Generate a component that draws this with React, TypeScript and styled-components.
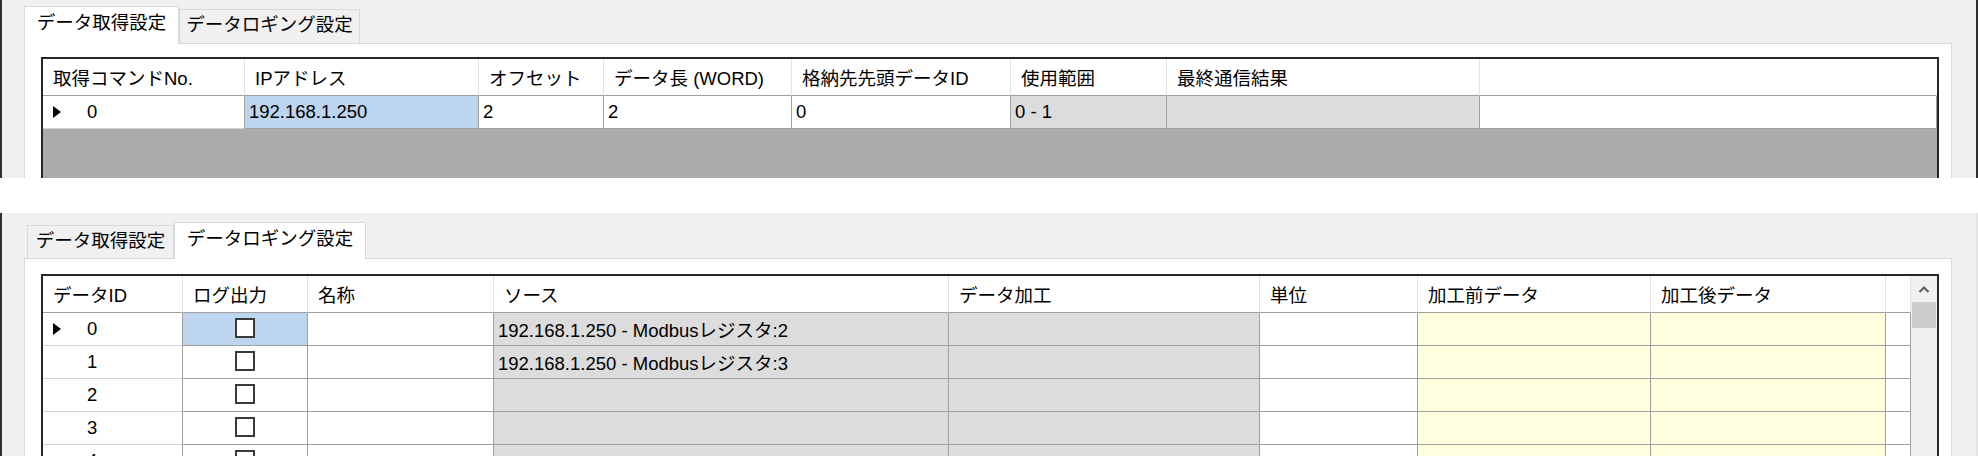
import React from "react";
import styled, { createGlobalStyle } from "styled-components";

const GlobalStyle = createGlobalStyle`
  html, body { margin: 0; padding: 0; background: #ffffff; }
  body {
    font-family: "Liberation Sans", "Noto Sans CJK JP", sans-serif;
    color: #000;
  }
`;

type Kind = "white" | "sel" | "ro" | "yellow";
const fills: Record<Kind, string> = {
  white: "#ffffff",
  sel: "#bdd5ee",
  ro: "#dcdcdc",
  yellow: "#ffffe0",
};

const Page = styled.div`
  width: 1978px;
  display: flex;
  flex-direction: column;
  gap: 35px;
`;

const Shot = styled.section<{ $h: number; $pt: number; $edge: string }>`
  box-sizing: border-box;
  height: ${(p) => p.$h}px;
  background: #f0f0f0;
  border-left: 2px solid #303030;
  border-right: 2px solid ${(p) => p.$edge};
  padding: ${(p) => p.$pt}px 24px 0 22px;
  display: flex;
  flex-direction: column;
  overflow: hidden;
`;

const TabStrip = styled.div<{ $indent: number }>`
  display: flex;
  align-items: flex-end;
  padding-left: ${(p) => p.$indent}px;
  position: relative;
  z-index: 1;
`;

const Tab = styled.div<{ $active?: boolean; $w: number; $h: number }>`
  box-sizing: border-box;
  width: ${(p) => p.$w}px;
  height: ${(p) => p.$h}px;
  margin-bottom: ${(p) => (p.$active ? -1 : 0)}px;
  background: ${(p) => (p.$active ? "#ffffff" : "#f0f0f0")};
  border: 1px solid #d9d9d9;
  border-bottom: none;
  display: flex;
  justify-content: center;
  align-items: flex-start;
  padding-top: ${(p) => (p.$active ? 4 : 3)}px;
  font-size: 18.5px;
  line-height: 24px;
  white-space: nowrap;
  position: relative;
  z-index: ${(p) => (p.$active ? 2 : 1)};
`;

const Panel = styled.div<{ $pt: number }>`
  flex: 1;
  min-height: 0;
  background: #ffffff;
  border: 1px solid #d9d9d9;
  border-bottom: none;
  padding: ${(p) => p.$pt}px 12px 0 16px;
  display: flex;
  flex-direction: column;
`;

const GridFrame = styled.div<{ $bg: string }>`
  flex: 1;
  min-height: 0;
  border: 2px solid #262626;
  border-bottom: none;
  background: ${(p) => p.$bg};
  display: flex;
  overflow: hidden;
`;

const Table = styled.div<{ $cols: string }>`
  flex: 1;
  display: grid;
  grid-template-columns: ${(p) => p.$cols};
  grid-template-rows: 37px;
  grid-auto-rows: 33px;
  align-content: start;
`;

const HeadCell = styled.div<{ $last?: boolean }>`
  box-sizing: border-box;
  background: #ffffff;
  border-right: 1px solid ${(p) => (p.$last ? "transparent" : "#e2e2e2")};
  border-bottom: 1px solid #a0a0a0;
  padding-left: 10px;
  display: flex;
  align-items: center;
  font-size: 18.5px;
  white-space: nowrap;
  overflow: hidden;
`;

const Cell = styled.div<{ $kind: Kind }>`
  box-sizing: border-box;
  background: ${(p) => fills[p.$kind]};
  border-right: 1px solid #a0a0a0;
  border-bottom: 1px solid #a0a0a0;
  padding-left: 4px;
  display: flex;
  align-items: center;
  font-size: 18.5px;
  white-space: nowrap;
  overflow: hidden;
`;

const RowHeadCell = styled.div`
  box-sizing: border-box;
  background: #ffffff;
  border-right: 1px solid #a0a0a0;
  border-bottom: 1px solid #d4d4d4;
  padding-left: 10px;
  display: flex;
  align-items: center;
  font-size: 18.5px;
`;

const MarkerSlot = styled.span`
  width: 34px;
  display: flex;
  align-items: center;
`;

const CheckCell = styled(Cell)`
  justify-content: center;
  padding-left: 0;
  padding-bottom: 2px;
`;

const CheckBox = styled.span`
  box-sizing: border-box;
  width: 20px;
  height: 20px;
  border: 2px solid #3a3a3a;
  background: #ffffff;
`;

const Scrollbar = styled.div`
  width: 26px;
  flex: none;
  background: #f0f0f0;
  display: flex;
  flex-direction: column;
`;

const ScrollArrow = styled.div`
  height: 26px;
  display: flex;
  align-items: center;
  justify-content: center;
`;

const ScrollThumb = styled.div`
  height: 26px;
  margin-left: 1px;
  width: 24px;
  background: #cdcdcd;
`;

const Marker = () => (
  <svg width="8" height="12" viewBox="0 0 8 12">
    <polygon points="0,0 8,6 0,12" fill="#000" />
  </svg>
);

const UpChevron = () => (
  <svg width="12" height="8" viewBox="0 0 12 8">
    <polyline points="1.5,7 6,2.5 10.5,7" fill="none" stroke="#606060" strokeWidth="2.2" />
  </svg>
);

type DataCell = { text?: string; kind?: Kind; check?: boolean };
type Row = { no: string; current?: boolean; cells: DataCell[] };

const RowHeader = ({ row }: { row: Row }) => (
  <RowHeadCell>
    <MarkerSlot>{row.current ? <Marker /> : null}</MarkerSlot>
    {row.no}
  </RowHeadCell>
);

const Rows = ({ rows }: { rows: Row[] }) => (
  <>
    {rows.map((r, i) => (
      <React.Fragment key={i}>
        <RowHeader row={r} />
        {r.cells.map((c, j) =>
          c.check ? (
            <CheckCell key={j} $kind={c.kind ?? "white"}>
              <CheckBox />
            </CheckCell>
          ) : (
            <Cell key={j} $kind={c.kind ?? "white"}>
              {c.text}
            </Cell>
          )
        )}
      </React.Fragment>
    ))}
  </>
);

const topCols = [202, 234, 125, 188, 219, 156, 313, 457];
const topHeaders = [
  "取得コマンドNo.",
  "IPアドレス",
  "オフセット",
  "データ長 (WORD)",
  "格納先先頭データID",
  "使用範囲",
  "最終通信結果",
  "",
];
const topRows: Row[] = [
  {
    no: "0",
    current: true,
    cells: [
      { text: "192.168.1.250", kind: "sel" },
      { text: "2" },
      { text: "2" },
      { text: "0" },
      { text: "0 - 1", kind: "ro" },
      { kind: "ro" },
      {},
    ],
  },
];

const bottomCols = [140, 125, 186, 455, 311, 158, 233, 235, 25];
const bottomHeaders = [
  "データID",
  "ログ出力",
  "名称",
  "ソース",
  "データ加工",
  "単位",
  "加工前データ",
  "加工後データ",
  "",
];
const makeLogRow = (no: number, source?: string, current?: boolean): Row => ({
  no: String(no),
  current,
  cells: [
    { check: true, kind: current ? "sel" : "white" },
    {},
    { text: source, kind: "ro" },
    { kind: "ro" },
    {},
    { kind: "yellow" },
    { kind: "yellow" },
    {},
  ],
});
const bottomRows: Row[] = [
  makeLogRow(0, "192.168.1.250 - Modbusレジスタ:2", true),
  makeLogRow(1, "192.168.1.250 - Modbusレジスタ:3"),
  makeLogRow(2),
  makeLogRow(3),
  makeLogRow(4),
  makeLogRow(5),
];

const toCols = (w: number[]) => w.map((x) => `${x}px`).join(" ");

export default function App() {
  return (
    <>
      <GlobalStyle />
      <Page>
        <Shot $h={178} $pt={6} $edge="#303030">
          <TabStrip $indent={0}>
            <Tab $active $w={155} $h={38}>データ取得設定</Tab>
            <Tab $w={181} $h={34}>データロギング設定</Tab>
          </TabStrip>
          <Panel $pt={13}>
            <GridFrame $bg="#ababab">
              <Table $cols={toCols(topCols)}>
                {topHeaders.map((h, i) => (
                  <HeadCell key={i} $last={i === topHeaders.length - 1}>
                    {h}
                  </HeadCell>
                ))}
                <Rows rows={topRows} />
              </Table>
            </GridFrame>
          </Panel>
        </Shot>

        <Shot $h={243} $pt={9} $edge="#e4e4e4">
          <TabStrip $indent={3}>
            <Tab $w={147} $h={33}>データ取得設定</Tab>
            <Tab $active $w={192} $h={37}>データロギング設定</Tab>
          </TabStrip>
          <Panel $pt={15}>
            <GridFrame $bg="#ffffff">
              <Table $cols={toCols(bottomCols)}>
                {bottomHeaders.map((h, i) => (
                  <HeadCell key={i}>{h}</HeadCell>
                ))}
                <Rows rows={bottomRows} />
              </Table>
              <Scrollbar>
                <ScrollArrow>
                  <UpChevron />
                </ScrollArrow>
                <ScrollThumb />
              </Scrollbar>
            </GridFrame>
          </Panel>
        </Shot>
      </Page>
    </>
  );
}
